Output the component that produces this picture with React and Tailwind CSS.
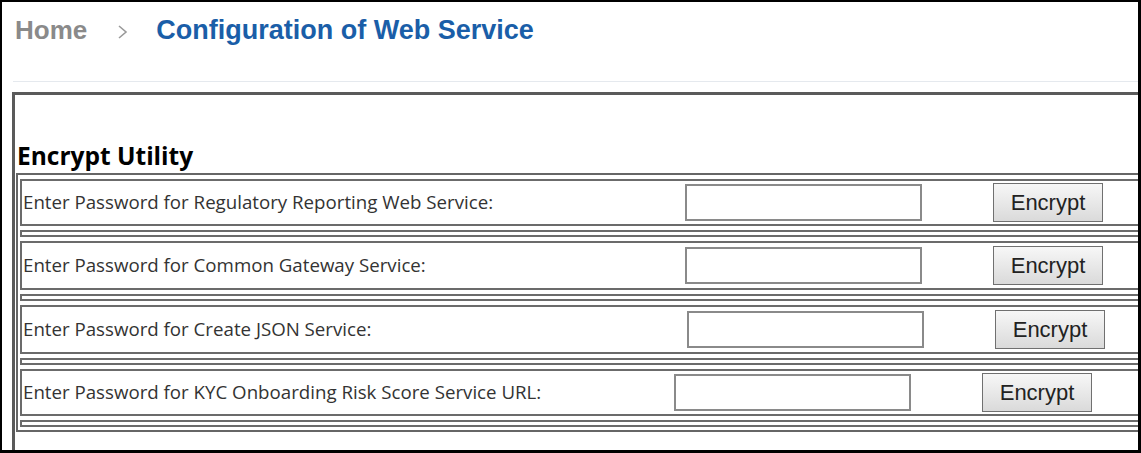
import React from "react";

const rows = [
  {
    label: "Enter Password for Regulatory Reporting Web Service:",
    box: "h-[47px]",
    lab: "w-[663px]",
  },
  {
    label: "Enter Password for Common Gateway Service:",
    box: "h-[49px]",
    lab: "w-[663px]",
  },
  {
    label: "Enter Password for Create JSON Service:",
    box: "h-[49px]",
    lab: "w-[665px]",
  },
  {
    label: "Enter Password for KYC Onboarding Risk Score Service URL:",
    box: "h-[47px]",
    lab: "w-[652px]",
  },
];

function Chevron() {
  return (
    <svg width="12" height="16" viewBox="0 0 12 16" className="block">
      <path d="M2 2 L9 8 L2 14" fill="none" stroke="#9a9a9a" strokeWidth="1.6" />
    </svg>
  );
}

export default function App() {
  return (
    <div className="w-[1141px] h-[453px] overflow-hidden bg-white border-l-2 border-t-2 border-r-[3px] border-b-[3px] border-black">
      <div className="ml-[11px] h-[80px] border-b border-[#e5e9ee] pt-[13px] pl-[2px]">
        <div className="flex items-center h-[30px] font-['Liberation_Sans',Arial,sans-serif] font-bold text-[27px] leading-[30px] whitespace-nowrap">
          <span className="text-[#8a8a8a] text-[26px]">Home</span>
          <span className="ml-[30px] mr-[27px] pt-[3px]">
            <Chevron />
          </span>
          <span className="text-[#1a5ea8]">Configuration of Web Service</span>
        </div>
      </div>
      <div className="mt-[10px] ml-[10px] w-[1200px] h-[400px] border-t-[3px] border-l-[3px] border-[#5a5a5a]">
        <div className="pt-[47px] pl-[2px] font-['Open_Sans','Noto_Sans',sans-serif] font-bold text-[24.5px] leading-[28px] text-black whitespace-nowrap">
          Encrypt Utility
        </div>
        <div className="mt-[3px] ml-[1px] border-t-2 border-l-2 border-b-2 border-[#666] pt-[4px] pl-[2px] pb-[3px] flex flex-col gap-[4px]">
          {rows.map((r, i) => (
            <React.Fragment key={i}>
              <div className={"border-2 border-[#6b6b6b] flex items-center " + r.box}>
                <div className={"pl-[1px] font-['Open_Sans','Noto_Sans',sans-serif] text-[18.7px] text-[#333] whitespace-nowrap " + r.lab}>
                  {r.label}
                </div>
                <div className="w-[237px] h-[37px] border-2 border-[#8a8a8a] bg-white" />
                <button className="ml-[71px] w-[110px] h-[39px] border border-[#707070] bg-gradient-to-b from-[#f7f7f7] to-[#dadada] font-['Liberation_Sans',Arial,sans-serif] text-[22px] text-[#222] leading-none">
                  Encrypt
                </button>
              </div>
              <div className="border-2 border-[#6b6b6b] h-[7px]" />
            </React.Fragment>
          ))}
        </div>
      </div>
    </div>
  );
}
